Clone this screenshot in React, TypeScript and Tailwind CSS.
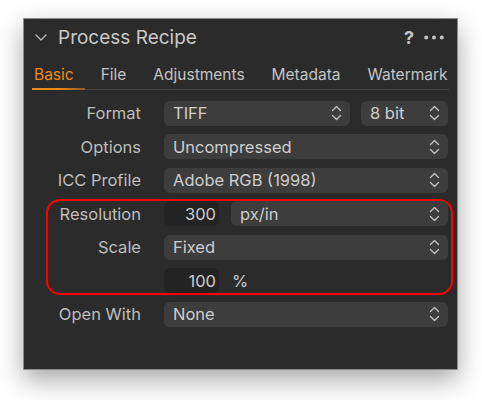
import React from "react";

const font = { fontFamily: "Inter, 'Noto Sans', sans-serif" };

function UpDown() {
  return (
    <svg width="11" height="16" viewBox="0 0 11 16" fill="none" className="shrink-0">
      <path d="M1.5 5.5 L5.5 1.5 L9.5 5.5" stroke="#c4c4c4" strokeWidth="1.3" strokeLinecap="round" strokeLinejoin="round" />
      <path d="M1.5 10.5 L5.5 14.5 L9.5 10.5" stroke="#c4c4c4" strokeWidth="1.3" strokeLinecap="round" strokeLinejoin="round" />
    </svg>
  );
}

function Select({ value, className = "" }: { value: string; className?: string }) {
  return (
    <div className={`h-[25px] rounded-[6px] bg-[#3d3d3d] flex items-center justify-between pl-[9px] pr-[8px] ${className}`}>
      <span className="text-[16.5px] leading-[20px] text-[#cdcdcd] whitespace-nowrap">{value}</span>
      <UpDown />
    </div>
  );
}

function NumField({ value }: { value: string }) {
  return (
    <div className="h-[25px] w-[55px] shrink-0 rounded-[6px] bg-[#232323] flex items-center justify-end pr-[3px]">
      <span className="text-[16.5px] leading-[20px] text-[#cdcdcd]">{value}</span>
    </div>
  );
}

function Row({ label, labelW, children }: { label: string; labelW: string; children?: React.ReactNode }) {
  return (
    <div className="flex items-center h-[25px] gap-[23px]">
      <div className={`${labelW} shrink-0 text-right text-[16.5px] leading-[20px] text-[#bdbdbd] whitespace-nowrap`}>{label}</div>
      <div className="flex-1 flex items-center min-w-0">{children}</div>
    </div>
  );
}

export default function App() {
  return (
    <div className="w-[482px] h-[400px] bg-white pt-[18px] pl-[23px]" style={font}>
      <div className="w-[435px] h-[352px] bg-[#2b2b2b] border border-[#8e8e8e] shadow-[0_10px_24px_rgba(0,0,0,0.35)] flex flex-col">
        {/* header */}
        <div className="h-[37px] flex items-center pl-[11px] pr-[13px]">
          <svg width="12" height="7" viewBox="0 0 12 7" fill="none" className="shrink-0">
            <path d="M1 1 L6 6 L11 1" stroke="#bdbdbd" strokeWidth="1.3" strokeLinecap="round" strokeLinejoin="round" />
          </svg>
          <span className="ml-[11px] text-[19px] leading-[24px] text-[#c9c9c9]">Process Recipe</span>
          <div className="ml-auto flex items-center gap-[10px]">
            <span className="text-[18px] leading-[22px] font-bold text-[#c4c4c4]">?</span>
            <svg width="20" height="5" viewBox="0 0 20 5" className="shrink-0">
              <circle cx="2.2" cy="2.5" r="2" fill="#c4c4c4" />
              <circle cx="10" cy="2.5" r="2" fill="#c4c4c4" />
              <circle cx="17.8" cy="2.5" r="2" fill="#c4c4c4" />
            </svg>
          </div>
        </div>
        {/* tabs */}
        <div className="ml-[8px] mr-[8px] flex flex-col">
          <div className="flex items-center gap-[27px] pl-[2px] pt-[10px] pb-[4px] text-[15.5px] leading-[18px] whitespace-nowrap">
            <span className="text-[#ef8a16]">Basic</span>
            <span className="text-[#c4c4c4]">File</span>
            <span className="text-[#c4c4c4]">Adjustments</span>
            <span className="text-[#c4c4c4]">Metadata</span>
            <span className="text-[#c4c4c4]">Watermark</span>
          </div>
          <div className="flex items-end h-[2px]">
            <div className="w-[53px] h-[2px] bg-gradient-to-r from-[#ef8a16] via-[#ef8a16] to-[#8a5a2a]" />
            <div className="flex-1 h-px bg-[#454545]" />
          </div>
        </div>
        {/* form */}
        <div className="mt-[10.5px] pl-[22px] pr-[9px] flex flex-col gap-[8.5px]">
          <Row label="Format" labelW="w-[95px]">
            <Select value="TIFF" className="flex-1" />
            <Select value="8 bit" className="w-[87px] ml-[11px] shrink-0" />
          </Row>
          <Row label="Options" labelW="w-[95px]">
            <Select value="Uncompressed" className="flex-1" />
          </Row>
          <Row label="ICC Profile" labelW="w-[95px]">
            <Select value="Adobe RGB (1998)" className="flex-1" />
          </Row>
          <div className="-mt-[2px] -mb-[2px] -mr-[5px] pr-[3px] border-2 border-[#ff0000] rounded-[14px] flex flex-col gap-[8.5px]">
            <Row label="Resolution" labelW="w-[93px]">
              <NumField value="300" />
              <Select value="px/in" className="flex-1 ml-[12px]" />
            </Row>
            <Row label="Scale" labelW="w-[93px]">
              <Select value="Fixed" className="flex-1" />
            </Row>
            <Row label="" labelW="w-[93px]">
              <NumField value="100" />
              <span className="ml-[13px] text-[16.5px] leading-[20px] text-[#cdcdcd]">%</span>
            </Row>
          </div>
          <Row label="Open With" labelW="w-[95px]">
            <Select value="None" className="flex-1" />
          </Row>
        </div>
      </div>
    </div>
  );
}
